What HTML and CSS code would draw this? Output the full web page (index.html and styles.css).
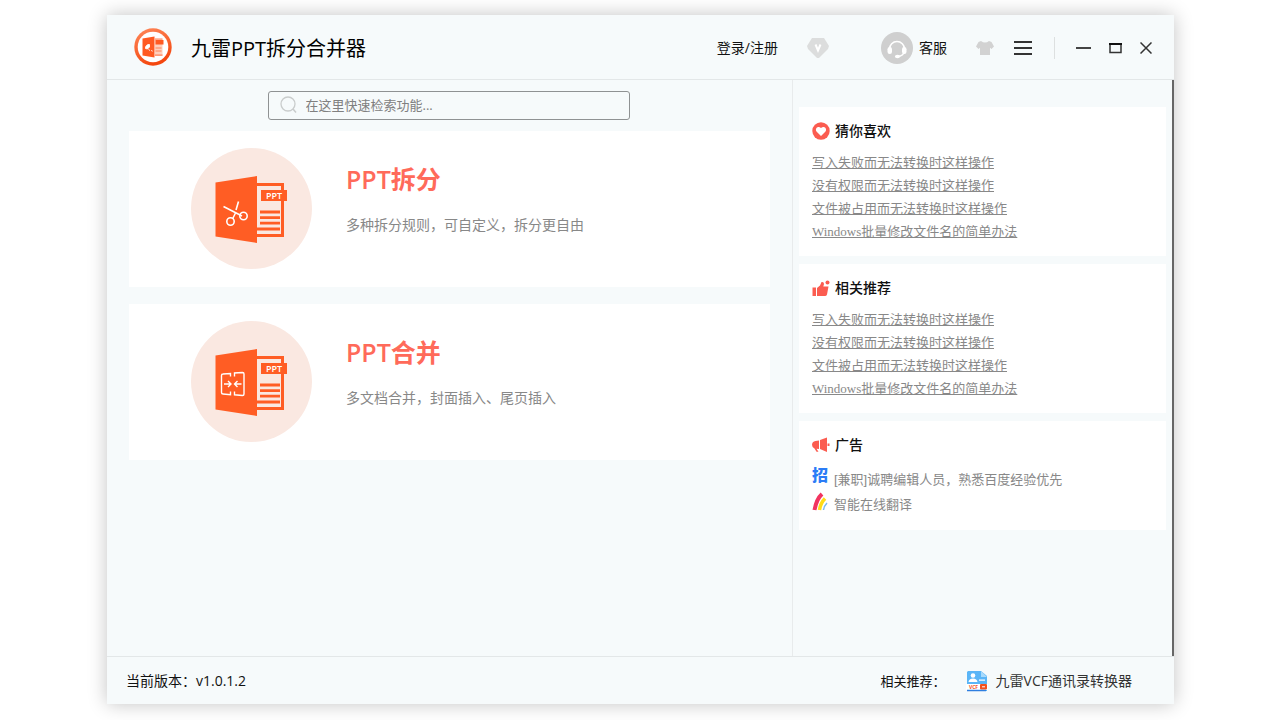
FILE: index.html
```html
<!DOCTYPE html>
<html lang="zh-CN">
<head>
<meta charset="utf-8">
<title>九雷PPT拆分合并器</title>
<link rel="stylesheet" href="styles.css">
</head>
<body>
<div class="window">
  <header class="titlebar">
    <svg class="logo" viewBox="0 0 38 38" aria-hidden="true">
      <defs><linearGradient id="ring" x1="0" y1="0" x2="0.4" y2="1"><stop offset="0" stop-color="#ff8a5c"/><stop offset="1" stop-color="#f4470f"/></linearGradient></defs>
      <circle cx="19" cy="19" r="18.700" fill="url(#ring)"/>
      <circle cx="19" cy="19" r="15.300" fill="#fff"/>
      <path d="M8.500 10.500L20.500 8.500V29.500L8.500 27.500z" fill="#ff5a22"/>
      <path d="M21 11h7.500v16.500H21z" fill="#ffd0bd"/>
      <path d="M21 11h7.500M21.500 20h6M21.500 23h6M21 27.200h7.500" stroke="#ff8158" stroke-width="1.200"/>
      <rect x="21.500" y="12" width="8" height="4.500" fill="#ff5a22"/>
      <path d="M11.500 20.500a3.500 3.500 0 0 1 4-4v2.500l-2 2zM14.500 21.500l1.500 1M17.500 22l0.800 1.500" fill="#fff" stroke="#fff" stroke-width="0.900"/>
    </svg>
    <h1 class="app-name">九雷PPT拆分合并器</h1>
    <div class="account">
      <button class="text-button">登录/注册</button>
      <button class="icon-button vip" aria-label="会员">
        <svg width="24" height="22" viewBox="0 0 24 22"><path d="M6 1h12l5 8-1 3-8.500 8.500q-1.500 1-3 0L2 12 1 9z" fill="#dcdddd"/><path d="M9.500 7.500l2.500 6 2.500-6" fill="none" stroke="#fff" stroke-width="2"/></svg>
      </button>
      <button class="text-button service">
        <svg width="32" height="32" viewBox="0 0 32 32" aria-hidden="true"><circle cx="16" cy="16" r="16" fill="#cfcfcf"/><path d="M8.500 17a7.500 7.500 0 0 1 15 0v1c0 4-3 6.500-7 6.500" fill="none" stroke="#fff" stroke-width="1.600"/><rect x="6.500" y="15" width="4.500" height="7" rx="2.200" fill="#fff"/><rect x="21" y="15" width="4.500" height="7" rx="2.200" fill="#fff"/><ellipse cx="16.500" cy="24.500" rx="2.600" ry="1.800" fill="#fff"/></svg>
        客服
      </button>
    </div>
    <div class="tools">
      <button class="icon-button" aria-label="皮肤"><svg width="18" height="14" viewBox="0 0 18 14"><path d="M5 0q4 3 8 0l2.500 1L18 5.500 15.500 8 14 6.800V14H4V6.800L2.500 8 0 5.500 2.500 1z" fill="#d2d2d2"/></svg></button>
      <button class="icon-button" aria-label="菜单"><svg width="18" height="14" viewBox="0 0 18 14"><path d="M0 1h18M0 7h18M0 13h18" stroke="#333" stroke-width="2"/></svg></button>
    </div>
    <div class="window-controls">
      <button class="icon-button" aria-label="最小化"><svg width="15" height="12" viewBox="0 0 15 12"><path d="M0 6h15" stroke="#444" stroke-width="2"/></svg></button>
      <button class="icon-button" aria-label="最大化"><svg width="13" height="12" viewBox="0 0 13 12"><path d="M1 2.500V10.500H12V2.500" fill="none" stroke="#333" stroke-width="1.500"/><path d="M0 2h13" stroke="#111" stroke-width="2"/></svg></button>
      <button class="icon-button" aria-label="关闭"><svg width="12" height="12" viewBox="0 0 12 12"><path d="M0.500 0.500l11 11M11.500 0.500l-11 11" stroke="#333" stroke-width="1.500"/></svg></button>
    </div>
  </header>

  <div class="body">
    <main class="features">
      <label class="search">
        <svg width="18" height="18" viewBox="0 0 18 18" aria-hidden="true"><circle cx="8" cy="8" r="7" fill="none" stroke="#c9cccc" stroke-width="1.300"/><path d="M13 13l3 3.500" stroke="#c9cccc" stroke-width="1.500"/></svg>
        <input type="text" aria-label="检索功能" placeholder="在这里快速检索功能...">
      </label>

      <button class="card">
        <svg class="card-icon" viewBox="0 0 121 121" aria-hidden="true">
          <circle cx="60.500" cy="60.500" r="60.500" fill="#fae8e1"/>
          <path d="M65 36.500h26.500v51H65" fill="none" stroke="#ff5d24" stroke-width="3"/>
          <path d="M69 64h20M69 69.700h20M69 75.200h20M65 81h24" stroke="#ff5d24" stroke-width="2.800"/>
          <path d="M24.500 34.500L66 28V95L24.500 88.500z" fill="#ff5d24"/>
          <rect x="70" y="42" width="26" height="11" fill="#ff5d24"/>
          <text class="icon-text" x="83" y="50.500">PPT</text>
          <g fill="none" stroke="#fff" stroke-width="1.600"><path d="M32.500 58.500L51 68M47.500 53.500L45 62"/><circle cx="39.500" cy="73.500" r="3.700"/><circle cx="52.500" cy="68" r="3.700"/><path d="M44.500 65l-3 6"/></g>
        </svg>
        <span class="card-text"><span class="card-title">PPT拆分</span><span class="card-desc">多种拆分规则，可自定义，拆分更自由</span></span>
      </button>

      <button class="card">
        <svg class="card-icon" viewBox="0 0 121 121" aria-hidden="true">
          <circle cx="60.500" cy="60.500" r="60.500" fill="#fae8e1"/>
          <path d="M65 36.500h26.500v51H65" fill="none" stroke="#ff5d24" stroke-width="3"/>
          <path d="M69 64h20M69 69.700h20M69 75.200h20M65 81h24" stroke="#ff5d24" stroke-width="2.800"/>
          <path d="M24.500 34.500L66 28V95L24.500 88.500z" fill="#ff5d24"/>
          <rect x="70" y="42" width="26" height="11" fill="#ff5d24"/>
          <text class="icon-text" x="83" y="50.500">PPT</text>
          <g fill="none" stroke="#fff" stroke-width="1.400"><path d="M39.500 55.500V52.500L32 53q-1.500 0-1.500 1.500V71.500q0 1.500 1.500 1.500l7.500 0.700V70.500M43.500 55.500V52l8-0.500q1.500 0 1.500 1.500V73q0 1.500-1.500 1.500l-8-0.700V70.500M33 63h6.500M37 60l3 3-3 3M50.500 63H44M46.500 60l-3 3 3 3"/></g>
        </svg>
        <span class="card-text"><span class="card-title">PPT合并</span><span class="card-desc">多文档合并，封面插入、尾页插入</span></span>
      </button>
    </main>

    <aside class="sidebar">
      <section class="panel">
        <h2 class="panel-title"><svg width="18" height="18" viewBox="0 0 18 18" aria-hidden="true"><circle cx="9" cy="9" r="8.700" fill="#fb5c50"/><path d="M9 14L4.500 9.500C2.500 6.500 6 3.200 9 6c3-2.800 6.500.5 4.500 3.500z" fill="#fff"/></svg>猜你喜欢</h2>
        <ul class="links">
          <li><a href="#">写入失败而无法转换时这样操作</a></li>
          <li><a href="#">没有权限而无法转换时这样操作</a></li>
          <li><a href="#">文件被占用而无法转换时这样操作</a></li>
          <li><a href="#">Windows批量修改文件名的简单办法</a></li>
        </ul>
      </section>
      <section class="panel">
        <h2 class="panel-title"><svg width="18" height="18" viewBox="0 0 18 18" aria-hidden="true"><path d="M0.500 8.500h3.500V17H0.500zM5 9l3-2.500L9.500 3q2.500-.5 2.500 2l-.7 2.500H16.500L15 15.500Q14.500 17 13 17H5z" fill="#fb5c50"/><circle cx="15.500" cy="3.500" r="2" fill="#fb5c50"/></svg>相关推荐</h2>
        <ul class="links">
          <li><a href="#">写入失败而无法转换时这样操作</a></li>
          <li><a href="#">没有权限而无法转换时这样操作</a></li>
          <li><a href="#">文件被占用而无法转换时这样操作</a></li>
          <li><a href="#">Windows批量修改文件名的简单办法</a></li>
        </ul>
      </section>
      <section class="panel">
        <h2 class="panel-title"><svg width="18" height="18" viewBox="0 0 18 18" aria-hidden="true"><path d="M7 4.500V13L4.500 12.700l2 3H4.500L2.500 12.500Q0 11.500 0 8.700T3.500 5zM8 4l7-2.500V16L8 13zM15.500 7.500h2v2.500h-2z" fill="#fb5c50"/></svg>广告</h2>
        <ul class="ads">
          <li><span class="hire" aria-hidden="true">招</span><a href="#">[兼职]诚聘编辑人员，熟悉百度经验优先</a></li>
          <li><svg width="18" height="20" viewBox="0 0 18 20" aria-hidden="true"><g fill="none"><path d="M2.500 18Q4.500 7 10 2" stroke="#f2345f" stroke-width="4"/><path d="M7.500 18Q8.500 11 13 6.500" stroke="#ffdc18" stroke-width="3.500"/><path d="M11.500 18Q12 14 15 11" stroke="#78b9f2" stroke-width="1.500"/></g></svg><a href="#">智能在线翻译</a></li>
        </ul>
      </section>
    </aside>
  </div>

  <footer class="statusbar">
    <span>当前版本：v1.0.1.2</span>
    <div class="recommend">
      <span class="recommend-label">相关推荐：</span>
      <a href="#"><svg width="22" height="22" viewBox="0 0 22 22" aria-hidden="true"><path d="M2 1h13l6 5v15H1V2z" fill="#5ab5f7"/><path d="M15 1l6 6h-6z" fill="#a8dafc"/><circle cx="7" cy="5.500" r="2.300" fill="#fff"/><path d="M2.500 12q.5-3.500 4.500-3.500t4.500 3.500zM13 9.500h6v1.200h-6z" fill="#fff"/><path d="M0 14h22v6H0z" fill="#fff"/><rect x="14" y="14" width="7" height="5.500" rx="1" fill="#f4511e"/><path d="M16 16.800h3" stroke="#fff"/><text class="vcf" x="7.500" y="18.800">VCF</text><path d="M1 20.500h19" stroke="#2f7fe0" stroke-width="1.500"/></svg>九雷VCF通讯录转换器</a>
    </div>
  </footer>
</div>
</body>
</html>
```

FILE: styles.css
```css
* {
  box-sizing: border-box;
}

body {
  margin: 0;
  min-height: 100vh;
  display: flex;
  padding: 15px 106px 16px 107px;
  background: #fff;
  color: #111;
  font-family: "Open Sans", "Noto Sans CJK SC", sans-serif;
  font-size: 14px;
  line-height: 22px;
}

button,
input {
  font: inherit;
  color: inherit;
  background: none;
  border: 0;
  padding: 0;
}

button {
  cursor: pointer;
}

h1,
h2,
ul {
  margin: 0;
  padding: 0;
  list-style: none;
  font-weight: 400;
}

a {
  color: inherit;
  text-decoration: none;
}

svg {
  display: block;
  flex: none;
}

.window {
  flex: 1;
  display: flex;
  flex-direction: column;
  background: #f6fafb;
  box-shadow: 0 0 18px rgba(0, 0, 0, 0.24);
}

.titlebar {
  display: flex;
  align-items: center;
  height: 65px;
  padding: 0 22px 0 27px;
  border-bottom: 1px solid #e3e7e8;
}

.logo {
  width: 38px;
  height: 38px;
}

.app-name {
  flex: 1;
  margin-left: 19px;
  padding-top: 3px;
  color: #000;
  font-size: 20px;
  line-height: 28px;
}

.account {
  display: flex;
  align-items: center;
}

.vip {
  margin: 0 51px 0 28px;
}

.service {
  display: flex;
  align-items: center;
  gap: 6px;
}

.tools {
  display: flex;
  align-items: center;
  gap: 20px;
  height: 22px;
  margin-left: 29px;
  padding-right: 22px;
  border-right: 1px solid #dde0e0;
}

.window-controls {
  display: flex;
  align-items: center;
  gap: 18px;
  margin-left: 21px;
}

.account,
.tools,
.window-controls {
  margin-top: 1px;
}

.body {
  flex: 1;
  display: flex;
  border-right: 2px solid #666;
}

.features {
  flex: 1;
  display: flex;
  flex-direction: column;
  gap: 17px;
  padding: 11px 22px;
}

.search {
  align-self: center;
  display: flex;
  align-items: center;
  gap: 8px;
  width: 362px;
  height: 29px;
  margin: 0 2px -6px 0;
  padding: 0 11px 1px;
  border: 1px solid #8f9293;
  border-radius: 3px;
  font-size: 13px;
}

.search input {
  flex: 1;
  min-width: 0;
  outline: 0;
}

.search input::placeholder {
  color: #808080;
  opacity: 1;
}

.card {
  display: flex;
  align-items: center;
  gap: 34px;
  height: 156px;
  padding: 0 62px 1px;
  background: #fff;
  text-align: left;
}

.card-icon {
  width: 121px;
  height: 121px;
}

.card-text {
  display: flex;
  flex-direction: column;
  gap: 17px;
  padding-bottom: 20px;
}

.card-title {
  color: #ff6a5a;
  font-size: 25px;
  line-height: 36px;
  font-weight: 600;
}

.card-desc {
  color: #888;
}

.icon-text {
  fill: #fff;
  font-size: 9px;
  font-weight: 600;
  text-anchor: middle;
}

.sidebar {
  width: 380px;
  display: flex;
  flex-direction: column;
  gap: 8px;
  padding: 27px 6px 8px;
  border-left: 1px solid #e8ebec;
}

.panel {
  padding: 13px;
  background: #fff;
}

.panel-title {
  display: flex;
  align-items: center;
  gap: 5px;
  margin-bottom: 9px;
  font-size: 14px;
  font-weight: 500;
}

.links {
  color: #888;
  font-family: "Liberation Serif", "Noto Sans CJK SC", sans-serif;
  font-size: 13px;
  line-height: 23px;
}

.links a {
  text-decoration: underline;
}

.ads {
  padding-top: 2px;
  color: #888;
  font-family: "Liberation Sans", "Noto Sans CJK SC", sans-serif;
  font-size: 13px;
  line-height: 25px;
}

.ads li {
  display: flex;
  gap: 4px;
}

.hire {
  width: 18px;
  color: #2b7cf6;
  font-size: 16px;
  line-height: 18px;
  font-weight: 900;
}

.statusbar {
  display: flex;
  align-items: center;
  justify-content: space-between;
  height: 48px;
  padding: 0 42px 0 19px;
  border-top: 1px solid #e3e7e8;
}

.recommend,
.recommend a {
  display: flex;
  align-items: center;
}

.recommend {
  gap: 20px;
}

.recommend a {
  gap: 8px;
  color: #333;
}

.recommend-label {
  font-size: 13px;
}

.vcf {
  fill: #f4511e;
  font-size: 5px;
  font-weight: 700;
  text-anchor: middle;
}
```
